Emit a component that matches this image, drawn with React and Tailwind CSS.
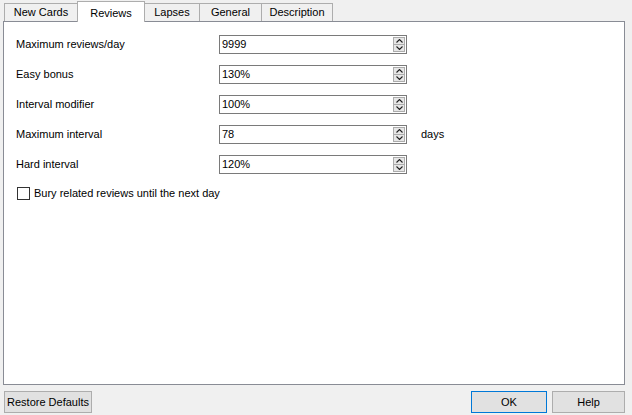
import React from 'react';

const rows = [
    { label: 'Maximum reviews/day', value: '9999' },
    { label: 'Easy bonus', value: '130%' },
    { label: 'Interval modifier', value: '100%' },
    { label: 'Maximum interval', value: '78', suffix: 'days' },
    { label: 'Hard interval', value: '120%' },
];

function Chevron({ up }) {
    return (
        <svg width="7" height="4" viewBox="0 0 7 4" className="block">
            <path
                d={up ? 'M0.5 3.5 L3.5 0.5 L6.5 3.5' : 'M0.5 0.5 L3.5 3.5 L6.5 0.5'}
                fill="none"
                stroke="#202020"
                strokeWidth="1.1"
            />
        </svg>
    );
}

// spin box with the little up/down arrows
function SpinBox({ value }) {
    return (
        <div className="w-[188px] h-[19px] bg-white border border-[#7a7a7a] flex items-stretch">
            <div className="flex-1 pl-[2px] flex items-center leading-none">{value}</div>
            <div className="w-[13px] flex flex-col py-[1px] pr-[1px]">
                <div className="flex-1 bg-[#e6e6e6] border border-[#acacac] flex items-center justify-center">
                    <Chevron up />
                </div>
                <div className="flex-1 bg-[#e6e6e6] border border-[#acacac] border-t-0 flex items-center justify-center">
                    <Chevron />
                </div>
            </div>
        </div>
    );
}

export default function App() {
    return (
        <div className="w-[632px] h-[415px] bg-[#f0f0f0] text-[11px] text-black font-['Liberation_Sans',Arial,sans-serif] overflow-hidden">
            {/* 탭 */}
            <div className="h-[21px] pl-[4px] flex items-end">
                <div className="w-[73px] h-[18px] border-l border-t border-[#adadad] bg-[#f0f0f0] flex items-center justify-center">New Cards</div>
                <div className="relative z-10 w-[68px] h-[21px] -mb-px border-l border-r border-t border-[#adadad] bg-white flex justify-center pt-[3px]">Reviews</div>
                <div className="w-[54px] h-[18px] border-t border-[#adadad] bg-[#f0f0f0] flex items-center justify-center">Lapses</div>
                <div className="w-[62px] h-[18px] border-l border-t border-[#adadad] bg-[#f0f0f0] flex items-center justify-center">General</div>
                <div className="w-[72px] h-[18px] border-l border-r border-t border-[#adadad] bg-[#f0f0f0] flex items-center justify-center">Description</div>
            </div>

            {/* 패널 */}
            <div className="ml-[3px] w-[622px] h-[364px] bg-white border border-[#898c95] pt-[13px] pl-[12px]">
                <div className="flex flex-col gap-[11px]">
                    {rows.map((r) => (
                        <div key={r.label} className="flex items-center h-[19px]">
                            <div className="w-[203px]">{r.label}</div>
                            <SpinBox value={r.value} />
                            {r.suffix && <div className="ml-[14px]">{r.suffix}</div>}
                        </div>
                    ))}
                </div>
                <div className="mt-[11px] ml-[1px] flex items-center gap-[4px]">
                    <div className="w-[13px] h-[13px] border border-[#333] bg-white" />
                    <span>Bury related reviews until the next day</span>
                </div>
            </div>

            {/* 하단 버튼 */}
            <div className="mt-[6px] flex items-center pl-[4px] pr-[7px]">
                <button className="w-[88px] h-[22px] bg-[#e1e1e1] border border-[#adadad] text-[11px] leading-none">Restore Defaults</button>
                <div className="flex-1" />
                <button className="w-[76px] h-[22px] bg-[#e1e1e1] border border-[#0078d7] text-[11px] leading-none">OK</button>
                <button className="ml-[5px] w-[73px] h-[22px] bg-[#e1e1e1] border border-[#adadad] text-[11px] leading-none">Help</button>
            </div>
        </div>
    );
}
